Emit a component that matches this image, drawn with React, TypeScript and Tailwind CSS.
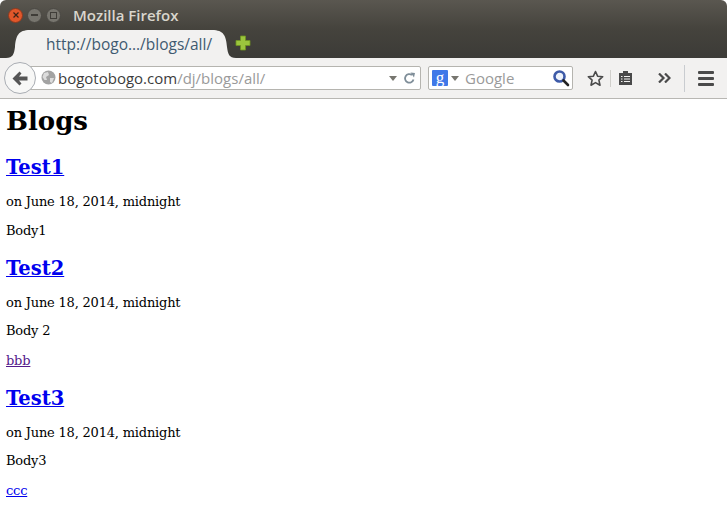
const serif = "font-['DejaVu_Serif',serif]";

const posts = [
	{ title: "Test1", body: "Body1" },
	{ title: "Test2", body: "Body 2", link: "bbb", visited: true },
	{ title: "Test3", body: "Body3", link: "ccc" },
];

const WindowButton = ({ className, children }: { className: string; children?: React.ReactNode }) => (
	<div className={`w-[15px] h-[15px] rounded-full flex items-center justify-center ${className}`}>{children}</div>
);

const TabShape = () => (
	<svg className="absolute left-0 top-0" width="258" height="30" viewBox="0 0 258 30">
		<path d="M6 29 C13 29 14 25 15 18 C16 7 18 1 30 1 L212 1 C224 1 226 7 227 18 C228 25 229 29 236 29 Z" fill="#f2f1f0" />
	</svg>
);

const App = () => {
	return (
		<div className="w-[727px] h-[509px] overflow-hidden bg-white">
			{/* title bar and tabs */}
			<div className="h-[58px] bg-gradient-to-b from-[#5a5750] via-[#45433d] to-[#3c3b37] rounded-t-md font-['Open_Sans',sans-serif]">
				<div className="h-[29px] flex items-center pl-[8px] pt-[1px]">
					<div className="flex items-center gap-[4px]">
						<WindowButton className="bg-[#e2572a] border border-[#8a3a20]">
							<svg width="6" height="6" viewBox="0 0 6 6">
								<path d="M0.5 0.5 L5.5 5.5 M5.5 0.5 L0.5 5.5" stroke="#3c2418" strokeWidth="1.2" />
							</svg>
						</WindowButton>
						<WindowButton className="bg-[#77756e] border border-[#4a4843]">
							<div className="w-[7px] h-[2px] bg-[#3f3d38]" />
						</WindowButton>
						<WindowButton className="bg-[#77756e] border border-[#4a4843]">
							<div className="w-[7px] h-[7px] border border-[#3f3d38]" />
						</WindowButton>
					</div>
					<span className="ml-[12px] text-[15px] font-semibold text-[#d9d6cd]">Mozilla Firefox</span>
				</div>
				<div className="h-[29px] flex items-start relative">
					<TabShape />
					<span className="relative ml-[46px] mt-[5px] text-[15.5px] leading-[20px] text-[#3f5a70] w-[189px] whitespace-nowrap">http://bogo…/blogs/all/</span>
					<svg className="relative mt-[6px]" width="16" height="16" viewBox="0 0 16 16">
						<path d="M5.5 1 H10.5 V5.5 H15 V10.5 H10.5 V15 H5.5 V10.5 H1 V5.5 H5.5 Z" fill="#9bc53d" stroke="#6f9420" strokeWidth="0.8" />
					</svg>
				</div>
			</div>

			{/* navigation toolbar */}
			<div className="h-[41px] bg-[#f2f1f0] border-b border-[#b8b7b3] flex items-center font-['Open_Sans',sans-serif] relative">
				<div className="ml-[9px] h-[24px] w-[412px] bg-white border border-[#b5b4af] rounded-[2px] flex items-center pl-[48px] pr-[4px]">
					<span className="text-[15px] text-[#3c3c3c] whitespace-nowrap">
						bogotobogo.com<span className="text-[#9a9a9a]">/dj/blogs/all/</span>
					</span>
					<div className="ml-auto flex items-center gap-[6px]">
						<div className="w-0 h-0 border-x-[4px] border-x-transparent border-t-[5px] border-t-[#77766f]" />
						<svg width="13" height="13" viewBox="0 0 13 13" fill="none">
							<path d="M10.5 7.5 A4.3 4.3 0 1 1 9 3" stroke="#7f8e99" strokeWidth="1.8" />
							<path d="M7.5 0.5 L12 1 L11 5.5 Z" fill="#7f8e99" />
						</svg>
					</div>
				</div>
				{/* back button sits over the url bar */}
				<div className="absolute left-[4px] top-[4px] w-[32px] h-[32px] rounded-full bg-[#f7f7f6] border border-[#a9adb3] flex items-center justify-center">
					<svg width="16" height="15" viewBox="0 0 16 15">
						<path d="M7.5 0.5 L0.5 7.5 L7.5 14.5 L9.5 12.5 L7 9.5 H15.5 V5.5 H7 L9.5 2.5 Z" fill="#555" />
					</svg>
				</div>
				<svg className="absolute left-[41px] top-[12px]" width="15" height="15" viewBox="0 0 15 15">
					<circle cx="7.5" cy="7.5" r="7" fill="#a3a3a3" />
					<path d="M3 3 L7 2 L8 5 L5 7 L6 10 L3.5 10 L1.5 7 Z M9 8 L13 8 L11 13 L9 12 Z" fill="#dcdcdc" />
				</svg>

				{/* search bar */}
				<div className="ml-[7px] h-[24px] w-[145px] bg-white border border-[#b5b4af] rounded-[2px] flex items-center pl-[3px] pr-[2px]">
					<div className="w-[16px] h-[16px] bg-[#3f78e8] rounded-[1px] flex items-center justify-center text-white text-[17px] leading-[14px] font-['Liberation_Serif',serif]">
						g
					</div>
					<div className="ml-[3px] w-0 h-0 border-x-[4px] border-x-transparent border-t-[5px] border-t-[#77766f]" />
					<span className="ml-[6px] text-[15px] text-[#9a9a9a]">Google</span>
					<svg className="ml-auto" width="18" height="18" viewBox="0 0 18 18" fill="none">
						<circle cx="7.5" cy="7.5" r="5" stroke="#3d5aa8" strokeWidth="2.6" fill="#eef3fb" />
						<path d="M11.5 11.5 L16 16" stroke="#222" strokeWidth="2.6" strokeLinecap="round" />
					</svg>
				</div>

				{/* toolbar icons */}
				<svg className="ml-[14px]" width="17" height="17" viewBox="0 0 17 17" fill="none">
					<path d="M8.5 1.5 L10.6 6.2 L15.7 6.7 L11.9 10.1 L13 15.2 L8.5 12.6 L4 15.2 L5.1 10.1 L1.3 6.7 L6.4 6.2 Z" stroke="#4a4a4a" strokeWidth="1.6" strokeLinejoin="round" />
				</svg>
				<div className="ml-[6px] w-px h-[17px] bg-[#d0cfcb]" />
				<svg className="ml-[7px]" width="15" height="16" viewBox="0 0 15 16">
					<path d="M5 1 H10 V3 H14 V15 H1 V3 H5 Z" fill="#4a4a4a" />
					<path d="M3 6 H4.5 V7 H3 Z M6 6 H12 V7 H6 Z M3 8.5 H4.5 V9.5 H3 Z M6 8.5 H12 V9.5 H6 Z M3 11 H4.5 V12 H3 Z M6 11 H12 V12 H6 Z" fill="#f2f1f0" />
				</svg>
				<svg className="ml-[25px]" width="13" height="10" viewBox="0 0 13 10" fill="none">
					<path d="M1 0.5 L5.5 5 L1 9.5 M7 0.5 L11.5 5 L7 9.5" stroke="#4a4a4a" strokeWidth="2.2" />
				</svg>
				<div className="ml-[13px] w-px h-[27px] bg-[#c9ccd0]" />
				<div className="ml-[13px] flex flex-col gap-[3px]">
					<div className="w-[16px] h-[3px] rounded-[1px] bg-[#4a4a4a]" />
					<div className="w-[16px] h-[3px] rounded-[1px] bg-[#4a4a4a]" />
					<div className="w-[16px] h-[3px] rounded-[1px] bg-[#4a4a4a]" />
				</div>
			</div>

			{/* page */}
			<div className={`${serif} text-black pl-[6px] text-[13px] tracking-[-0.2px] leading-[17px]`}>
				<h1 className="text-[26px] tracking-normal leading-[33px] font-bold pt-[6px]">Blogs</h1>
				{posts.map((post) => (
					<div key={post.title}>
						<h2 className="text-[19.5px] tracking-normal leading-[25px] font-bold mt-[17px]">
							<a href="#" className="text-[#0000ee] underline">{post.title}</a>
						</h2>
						<p className="mt-[13px]">on June 18, 2014, midnight</p>
						<p className="mt-[11.5px]">{post.body}</p>
						{post.link && (
							<p className="mt-[12.5px]">
								<a href="#" className={post.visited ? "text-[#551a8b] underline" : "text-[#0000ee] underline"}>{post.link}</a>
							</p>
						)}
					</div>
				))}
			</div>
		</div>
	);
};

export default App;
